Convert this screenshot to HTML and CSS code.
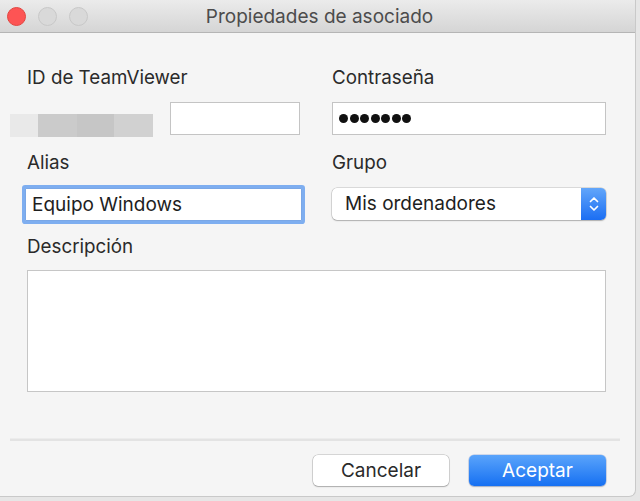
FILE: index.html
```html
<!DOCTYPE html>
<html lang="es">
<head>
<meta charset="utf-8">
<title>Propiedades de asociado</title>
<link rel="stylesheet" href="styles.css">
</head>
<body>
<div class="window">
  <div class="titlebar">
    <div class="lights">
      <span class="light close"></span>
      <span class="light"></span>
      <span class="light"></span>
    </div>
    <div class="title">Propiedades de asociado</div>
  </div>
  <div class="content">
    <div class="form">
      <div class="field">
        <div class="label">ID de TeamViewer</div>
        <div class="id-row">
          <div class="blur">
            <span class="b1"></span><span class="b2"></span><span class="b3"></span><span class="b4"></span>
          </div>
          <div class="input id-input"></div>
        </div>
      </div>
      <div class="field">
        <div class="label">Contraseña</div>
        <div class="input pw"><span class="dots"><i></i><i></i><i></i><i></i><i></i><i></i><i></i></span></div>
      </div>
      <div class="field">
        <div class="label">Alias</div>
        <div class="input focused">Equipo Windows</div>
      </div>
      <div class="field">
        <div class="label">Grupo</div>
        <div class="select">
          <span class="select-text">Mis ordenadores</span>
          <span class="select-arrow">
            <svg width="12" height="18" viewBox="0 0 12 18"><path d="M2.5 6.5 L6 3 L9.5 6.5" fill="none" stroke="#fff" stroke-width="1.7" stroke-linecap="round" stroke-linejoin="round"/><path d="M2.5 11.5 L6 15 L9.5 11.5" fill="none" stroke="#fff" stroke-width="1.7" stroke-linecap="round" stroke-linejoin="round"/></svg>
          </span>
        </div>
      </div>
      <div class="field wide">
        <div class="label desc-label">Descripción</div>
        <div class="textarea"></div>
      </div>
    </div>
    <div class="separator"></div>
    <div class="buttons">
      <button class="btn">Cancelar</button>
      <button class="btn primary">Aceptar</button>
    </div>
  </div>
</div>
</body>
</html>
```
FILE: styles.css
```css
* { box-sizing: border-box; }
html, body {
  margin: 0;
  padding: 0;
  width: 640px;
  height: 501px;
  overflow: hidden;
  background: #e6e6e6;
}
body {
  font-family: Inter, "Liberation Sans", sans-serif;
  color: #262626;
}
.window {
  width: 636px;
  height: 497px;
  background: #f5f5f5;
  border-right: 1px solid #c9c9c9;
  border-bottom: 1px solid #c9c9c9;
  border-bottom-right-radius: 7px;
  display: flex;
  flex-direction: column;
  overflow: hidden;
}
.titlebar {
  height: 33px;
  flex: 0 0 33px;
  background: linear-gradient(#ebebeb, #d5d5d5);
  border-bottom: 1px solid #b5b5b5;
  position: relative;
  display: flex;
  align-items: center;
  justify-content: center;
}
.lights {
  position: absolute;
  left: 7px;
  top: 7px;
  display: flex;
  gap: 12px;
}
.light {
  width: 19px;
  height: 19px;
  border-radius: 50%;
  background: #d9d9d9;
  border: 1px solid #c8c8c8;
}
.light.close {
  background: #fd5454;
  border-color: #e24640;
}
.title {
  font-size: 19px;
  color: #4c4c4c;
  padding-left: 4px;
}
.content {
  flex: 1;
  padding: 35px 29px 0 27px;
  display: flex;
  flex-direction: column;
}
.form {
  display: grid;
  grid-template-columns: 273px 274px;
  column-gap: 32px;
  row-gap: 16px;
}
.field {
  display: flex;
  flex-direction: column;
}
.field.wide {
  grid-column: 1 / 3;
}
.label {
  font-size: 18.8px;
  line-height: 20px;
  height: 20px;
  margin-bottom: 14px;
  color: #2a2a2a;
}
.desc-label { margin-bottom: 13px; }
.id-row {
  display: flex;
  align-items: flex-start;
  margin-left: -17px;
}
.blur {
  display: flex;
  margin-top: 12px;
  height: 23px;
  margin-right: 17px;
}
.blur span { display: block; height: 23px; }
.b1 { width: 28px; background: #e9e9e9; }
.b2 { width: 39px; background: #cbcbcb; }
.b3 { width: 37px; background: #c6c6c6; }
.b4 { width: 39px; background: #d1d1d1; }
.input {
  height: 33px;
  background: #fff;
  border: 1px solid #c4c4c4;
  font-size: 19px;
  line-height: 31px;
  padding-left: 7px;
  color: #1e1e1e;
}
.id-input { flex: 1; }
.pw {
  display: flex;
  align-items: center;
  padding-left: 6px;
}
.dots { display: flex; gap: 1.5px; }
.dots i {
  display: block;
  width: 9px;
  height: 9px;
  border-radius: 50%;
  background: #111;
}
.input.focused {
  margin: 1px -2px 0 -2px;
  border: 1px solid #7aa7e6;
  box-shadow: 0 0 0 3px #7eaef0;
  border-radius: 1px;
  padding-left: 6px;
}
.select {
  height: 32px;
  margin-top: 1px;
  background: #fff;
  border-radius: 5px;
  box-shadow: 0 0 0 0.5px rgba(0,0,0,0.22), 0 1px 1.5px rgba(0,0,0,0.2);
  display: flex;
  align-items: stretch;
  overflow: hidden;
}
.select-text {
  flex: 1;
  font-size: 19px;
  line-height: 32px;
  padding-left: 13px;
  color: #1e1e1e;
}
.select-arrow {
  width: 25px;
  background: linear-gradient(#62a6fa, #1b6ef3);
  display: flex;
  align-items: center;
  justify-content: center;
}
.textarea {
  height: 122px;
  background: #fff;
  border: 1px solid #c6c6c6;
}
.separator {
  margin: 46px -14px 0 -17px;
  height: 3px;
  background: #e3e3e3;
  border-top: 1px solid #ececec;
}
.buttons {
  margin-top: 14px;
  display: flex;
  justify-content: flex-end;
  gap: 20px;
}
.btn {
  font-family: Inter, "Liberation Sans", sans-serif;
  width: 136px;
  height: 31px;
  border-radius: 5px;
  border: none;
  background: #fff;
  box-shadow: 0 0 0 0.5px rgba(0,0,0,0.25), 0 1px 1.5px rgba(0,0,0,0.2);
  font-size: 19px;
  color: #2a2a2a;
  padding: 0;
}
.btn.primary {
  width: 137px;
  color: #fff;
  background: linear-gradient(#5aa4fb, #1670f2);
  box-shadow: 0 0 0 0.5px rgba(0,60,180,0.3), 0 1px 1.5px rgba(0,0,0,0.2);
}
```
